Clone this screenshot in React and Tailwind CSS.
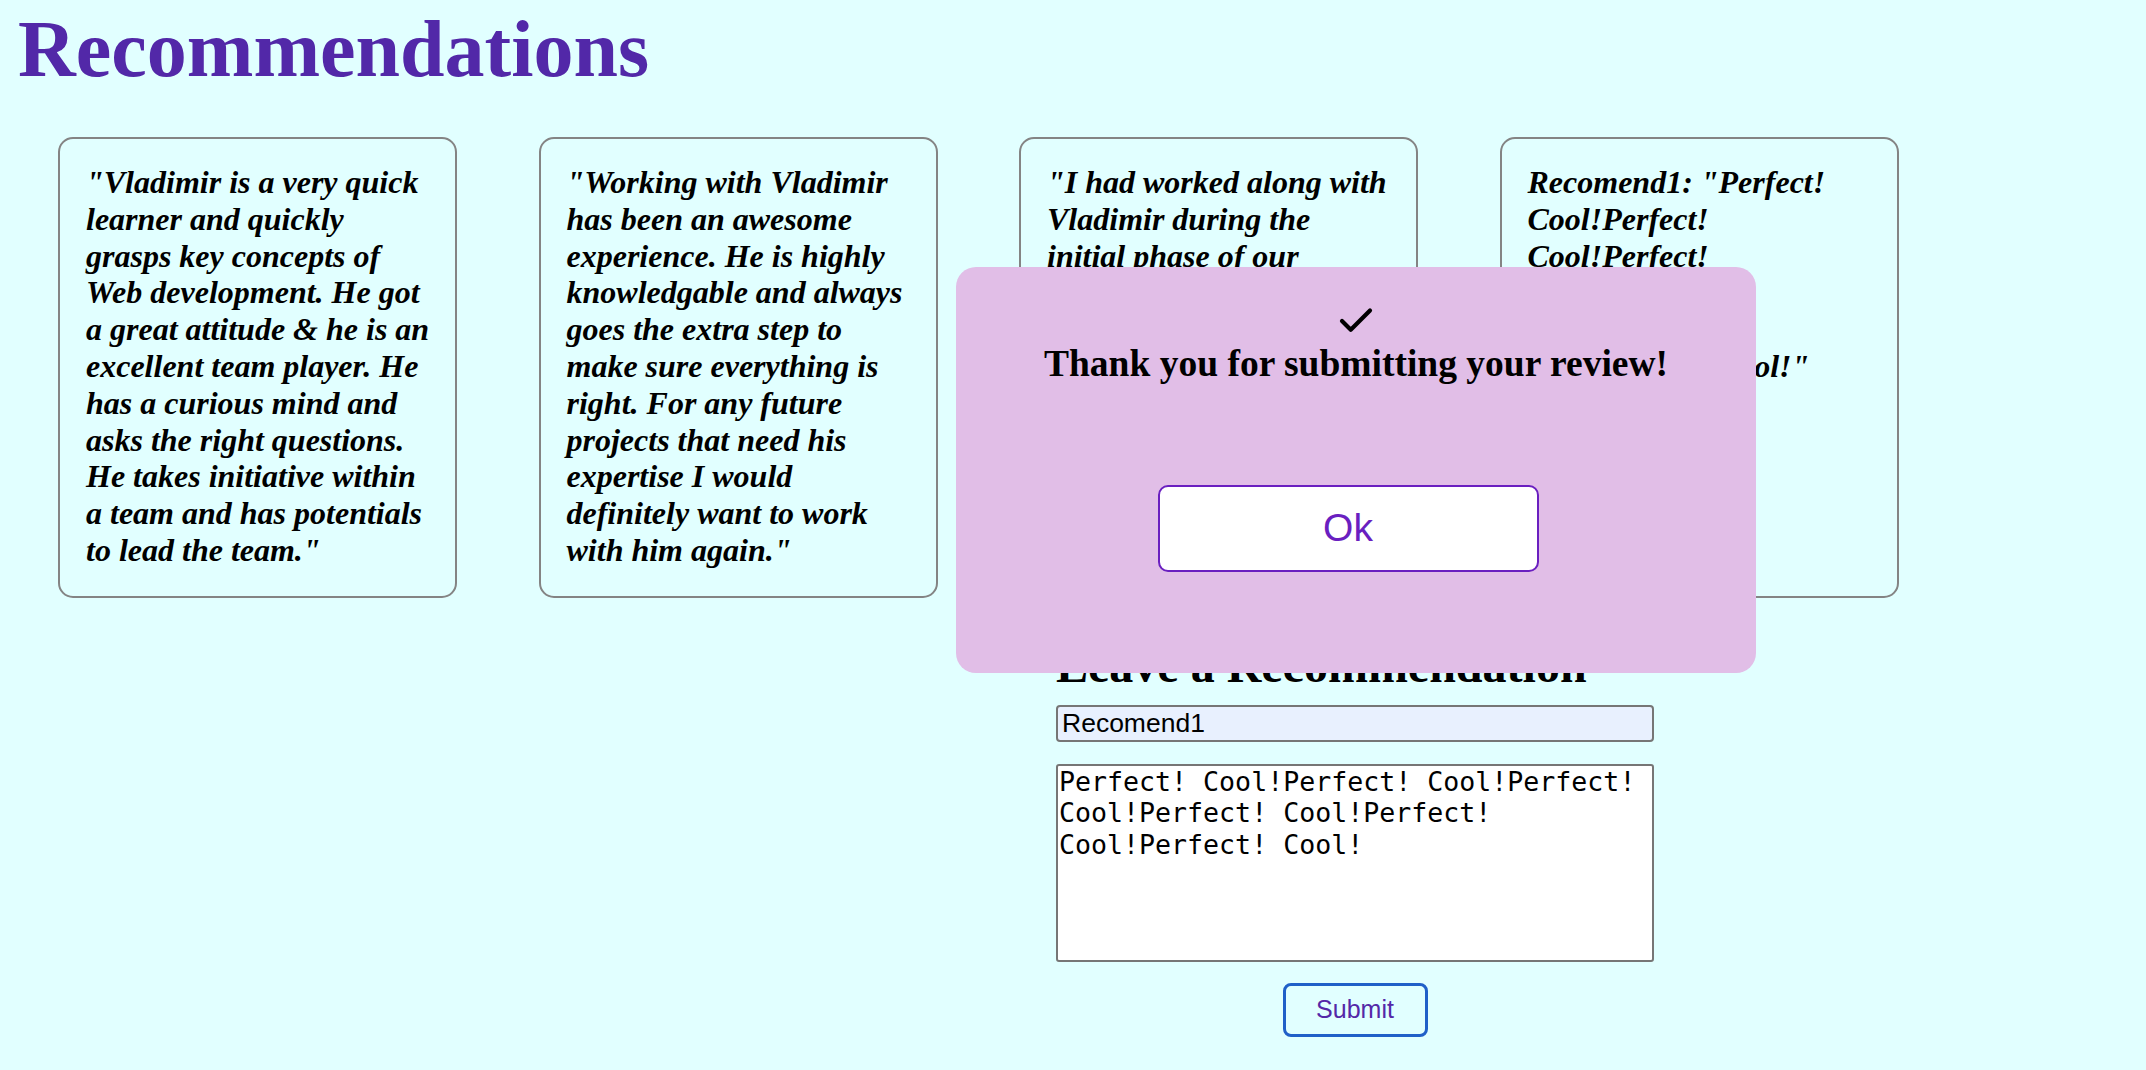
import React from "react";

const cards = [
  {
    text: '"Vladimir is a very quick learner and quickly grasps key concepts of Web development. He got a great attitude & he is an excellent team player. He has a curious mind and asks the right questions. He takes initiative within a team and has potentials to lead the team."',
  },
  {
    text: '"Working with Vladimir has been an awesome experience. He is highly knowledgable and always goes the extra step to make sure everything is right. For any future projects that need his expertise I would definitely want to work with him again."',
  },
  {
    text: '"I had worked along with Vladimir during the initial phase of our project. He was always eager to learn, communicated clearly and delivered quality work on time."',
  },
  {
    text: 'Recomend1: "Perfect! Cool!Perfect! Cool!Perfect! Cool!Perfect! Cool!Perfect! Cool!Perfect! Cool!"',
  },
];

const review =
  "Perfect! Cool!Perfect! Cool!Perfect! Cool!Perfect! Cool!Perfect! Cool!Perfect! Cool!";

export default function App() {
  return (
    <div className="relative min-h-screen w-full bg-[#e1ffff] font-['Liberation_Serif',serif] text-black">
      <h1 className="m-0 pl-[18px] pt-[9px] text-[80px] font-bold leading-[80px] text-[#5228a8]">
        Recommendations
      </h1>

      <div className="mt-[48px] flex items-stretch gap-[81.5px] pl-[58px]">
        {cards.map((c, i) => (
          <div
            key={i}
            className="box-border w-[399px] shrink-0 rounded-[15px] border-2 border-[#848484] pb-[27px] pl-[26px] pr-[20px] pt-[25px]"
          >
            <p className="m-0 text-[32px] font-bold italic leading-[36.8px]">{c.text}</p>
          </div>
        ))}
      </div>

      <div className="ml-[1056px] mt-[40px] flex w-[598px] flex-col">
        <h2 className="m-0 text-[48px] font-bold leading-[55px]">Leave a Recommendation</h2>
        <input
          readOnly
          value="Recomend1"
          className="mt-[12px] box-border h-[37px] w-full rounded-[4px] border-2 border-[#767676] bg-[#e8f0fe] px-[4px] py-[1px] font-['Liberation_Sans',Arial,sans-serif] text-[26.5px] leading-[30px] text-black outline-none"
        />
        <textarea
          readOnly
          value={review}
          className="mt-[22px] box-border h-[198px] w-full resize-none rounded-[3px] border-2 border-[#767676] bg-white p-[0px] pl-[1px] font-['DejaVu_Sans_Mono',monospace] text-[26.6px] leading-[31.7px] text-black outline-none"
        />
        <div className="mt-[21px] flex justify-center">
          <button className="box-border h-[54px] w-[145px] rounded-[8px] border-[3px] border-[#2060c8] bg-transparent font-['Liberation_Sans',Arial,sans-serif] text-[25px] text-[#5428a8]">
            Submit
          </button>
        </div>
      </div>

      <div className="absolute left-[956px] top-[267px] flex h-[406px] w-[800px] flex-col items-center rounded-[20px] bg-[#e1bee7] pt-[33px]">
        <svg
          width="42"
          height="42"
          viewBox="0 0 24 24"
          fill="none"
          stroke="#000"
          strokeWidth="2.4"
          strokeLinecap="round"
          strokeLinejoin="round"
        >
          <polyline points="20 6 9 17 4 12" />
        </svg>
        <h2 className="m-0 mt-[1px] text-[37.5px] font-bold leading-[42.5px]">
          Thank you for submitting your review!
        </h2>
        <button className="mr-[16px] mt-[99px] box-border h-[87px] w-[381px] rounded-[10px] border-2 border-[#6a1fc0] bg-white font-['Liberation_Sans',Arial,sans-serif] text-[39px] text-[#6a1fc0]">
          Ok
        </button>
      </div>
    </div>
  );
}
